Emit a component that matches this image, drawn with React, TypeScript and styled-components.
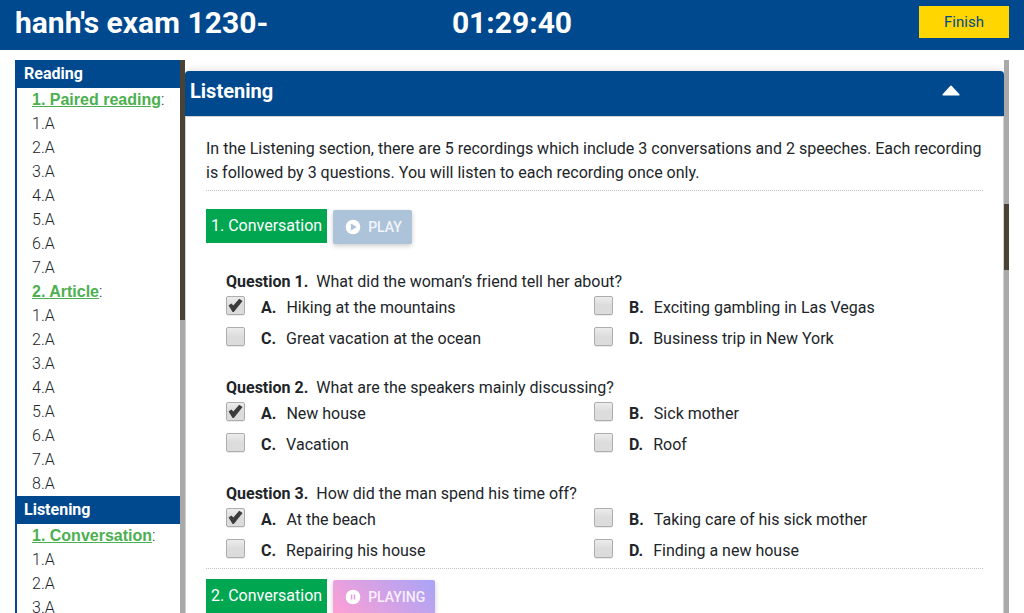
import React, { useState } from 'react';
import styled, { createGlobalStyle } from 'styled-components';

const BLUE = '#00498f';
const GREEN = '#00a650';
const RAIL = '#a9a9a9';
const THUMB = '#4b4236';

const GlobalStyle = createGlobalStyle`
  *, *::before, *::after { box-sizing: border-box; }
  body {
    margin: 0;
    background: #fff;
    color: #212529;
    font-family: Roboto, "Liberation Sans", sans-serif;
    font-size: 16px;
    line-height: 24px;
  }
  h1, h2, h3, p, ul, ol { margin: 0; padding: 0; font-size: inherit; }
  ul, ol { list-style: none; }
  button { font-family: inherit; cursor: pointer; }
`;

const Page = styled.div`
  display: flex;
  flex-direction: column;
  height: 100vh;
  overflow: hidden;
`;

const TopBar = styled.header`
  flex: none;
  display: grid;
  grid-template-columns: 1fr auto 1fr;
  align-items: start;
  height: 50px;
  padding: 6px 15px;
  background: ${BLUE};
  color: #fff;
`;

const ExamTitle = styled.h1`
  font-size: 30px;
  line-height: 34px;
  font-weight: 700;
  white-space: nowrap;
`;

const Timer = styled.div`
  font-size: 30px;
  line-height: 34px;
  font-weight: 700;
`;

const FinishButton = styled.button`
  justify-self: end;
  width: 90px;
  height: 32px;
  padding: 0;
  border: 0;
  background: #ffd600;
  color: ${BLUE};
  font-size: 15px;
`;

const Body = styled.div`
  flex: 1;
  min-height: 0;
  display: flex;
  padding: 10px 15px 0;
`;

const Sidebar = styled.nav`
  flex: none;
  display: flex;
  width: 170px;
`;

const SidebarList = styled.div`
  flex: 1;
  overflow: hidden;
  border-left: 2px solid ${BLUE};
`;

const SidebarHeading = styled.h2`
  padding: 0 7px;
  background: ${BLUE};
  color: #fff;
  font-weight: 700;
  line-height: 28px;
`;

const SidebarItem = styled.li`
  padding-left: 15px;
  font-weight: 300;
`;

const PartLink = styled.a`
  color: #4caf50;
  font-family: "Liberation Sans", Arial, sans-serif;
  font-weight: 700;
  text-decoration: underline;
`;

const Rail = styled.div`
  flex: none;
  display: flex;
  flex-direction: column;
  width: 5px;
  background: ${RAIL};
`;

const Thumb = styled.div<{ $size: number }>`
  height: ${(p) => p.$size}%;
  background: ${THUMB};
`;

const RailSpace = styled.div<{ $size: number }>`
  height: ${(p) => p.$size}%;
`;

const Main = styled.main`
  flex: 1;
  min-width: 0;
  display: flex;
`;

const Scroller = styled.div`
  flex: 1;
  min-width: 0;
  overflow: hidden;
  padding-top: 11px;
`;

const Card = styled.section`
  min-height: 100%;
  border: 1px solid #d0d0d0;
  border-top: 0;
  border-radius: 4px 4px 0 0;
  box-shadow: 0 0 10px rgba(0, 0, 0, 0.15);
`;

const CardHeader = styled.div`
  display: flex;
  align-items: center;
  justify-content: space-between;
  height: 45px;
  margin: 0 -1px;
  padding: 0 43px 6px 5px;
  border-radius: 4px 4px 0 0;
  background: ${BLUE};
  color: #fff;
  box-shadow: 0 1px 0 #d0d0d0;
`;

const CardTitle = styled.h2`
  font-size: 20px;
  font-weight: 700;
`;

const CollapseButton = styled.button`
  display: flex;
  padding: 0;
  border: 0;
  background: none;
  color: #fff;
`;

const CardBody = styled.div`
  padding: 21px 20px;
`;

const Intro = styled.p`
  padding-bottom: 5px;
  border-bottom: 1px dotted #c4c4c4;
`;

const Part = styled.section`
  border-bottom: 1px dotted #c4c4c4;
`;

const PartBar = styled.div<{ $first?: boolean }>`
  display: flex;
  align-items: flex-start;
  gap: 6px;
  padding: ${(p) => (p.$first ? 18 : 10)}px 0 26px;
`;

const PartLabel = styled.h3`
  padding: 0 5px;
  background: ${GREEN};
  color: #fff;
  font-weight: 400;
  line-height: 34px;
`;

const AudioButton = styled.button<{ $playing?: boolean }>`
  display: flex;
  align-items: center;
  gap: 7px;
  height: 34px;
  margin-top: 1px;
  padding: 0 10px 0 12px;
  border: 0;
  border-radius: 2px;
  background: ${(p) =>
    p.$playing ? 'linear-gradient(45deg, #ff9fd5, #a8a4f8)' : '#adc3da'};
  color: rgba(255, 255, 255, 0.85);
  font-size: 14px;
  font-weight: 500;
  box-shadow: 0 2px 5px rgba(0, 0, 0, 0.2);
`;

const Questions = styled.ol`
  display: flex;
  flex-direction: column;
  gap: 20px;
  padding: 0 21px 0 20px;
`;

const QuestionText = styled.p`
  display: flex;
  gap: 8px;
`;

const Options = styled.div`
  display: grid;
  grid-template-columns: 1fr 1fr;
`;

const Option = styled.label`
  display: flex;
  height: 31px;
  padding-top: 2px;
  cursor: pointer;
`;

const BoxSlot = styled.span`
  display: grid;
  width: 20px;
  height: 20px;
  margin-right: 15px;
  > * { grid-area: 1 / 1; }
`;

const Box = styled.input`
  appearance: none;
  width: 19px;
  height: 19px;
  margin: 0;
  border: 1px solid #adadad;
  border-radius: 2px;
  background: linear-gradient(#ececec, #dcdcdc 50%, #dcdcdc);
  box-shadow: 0 1px 0 rgba(0, 0, 0, 0.08);
`;

const Tick = styled.svg`
  pointer-events: none;
`;

const Letter = styled.b`
  margin-right: 10px;
`;

type QuestionData = { text: string; options: string[]; answer: number };

const LETTERS = ['A', 'B', 'C', 'D'];

const QUESTIONS: QuestionData[] = [
  {
    text: 'What did the woman’s friend tell her about?',
    options: [
      'Hiking at the mountains',
      'Exciting gambling in Las Vegas',
      'Great vacation at the ocean',
      'Business trip in New York',
    ],
    answer: 0,
  },
  {
    text: 'What are the speakers mainly discussing?',
    options: ['New house', 'Sick mother', 'Vacation', 'Roof'],
    answer: 0,
  },
  {
    text: 'How did the man spend his time off?',
    options: [
      'At the beach',
      'Taking care of his sick mother',
      'Repairing his house',
      'Finding a new house',
    ],
    answer: 0,
  },
];

const OUTLINE = [
  {
    title: 'Reading',
    parts: [
      { name: '1. Paired reading', count: 7 },
      { name: '2. Article', count: 8 },
    ],
  },
  { title: 'Listening', parts: [{ name: '1. Conversation', count: 3 }] },
];

function ScrollRail({ start, size }: { start: number; size: number }) {
  return (
    <Rail aria-hidden="true">
      <RailSpace $size={start} />
      <Thumb $size={size} />
    </Rail>
  );
}

function Question({ index, data }: { index: number; data: QuestionData }) {
  const [picked, setPicked] = useState(data.answer);
  return (
    <li>
      <QuestionText>
        <b>Question {index + 1}.</b>
        <span>{data.text}</span>
      </QuestionText>
      <Options>
        {data.options.map((option, i) => (
          <Option key={option}>
            <BoxSlot>
              <Box type="checkbox" checked={picked === i} onChange={() => setPicked(i)} />
              {picked === i && (
                <Tick width="19" height="19" viewBox="0 0 19 19" aria-hidden="true">
                  <path d="M2.6 9.6 5.4 7.6 7.3 9.6 13.2 2.8 16.6 5 7.8 16 6.6 16Z" fill="#3c3c3c" />
                </Tick>
              )}
            </BoxSlot>
            <Letter>{LETTERS[i]}.</Letter>
            <span>{option}</span>
          </Option>
        ))}
      </Options>
    </li>
  );
}

function PlayIcon() {
  return (
    <svg width="16" height="16" viewBox="0 0 16 16" aria-hidden="true">
      <circle cx="8" cy="8" r="7.3" fill="#fff" />
      <path d="M5.8 4.4v7.2L11.8 8Z" fill="#adc3da" />
    </svg>
  );
}

function PauseIcon() {
  return (
    <svg width="16" height="16" viewBox="0 0 16 16" aria-hidden="true">
      <circle cx="8" cy="8" r="7.3" fill="#fff" />
      <path d="M5.8 5.4h1.5v5H5.8ZM8.7 5.4h1.5v5H8.7Z" fill="#e0a2dd" />
    </svg>
  );
}

export default function App() {
  return (
    <Page>
      <GlobalStyle />
      <TopBar>
        <ExamTitle>hanh's exam 1230-</ExamTitle>
        <Timer role="timer">01:29:40</Timer>
        <FinishButton type="button">Finish</FinishButton>
      </TopBar>
      <Body>
        <Sidebar>
          <SidebarList>
            {OUTLINE.map((section) => (
              <section key={section.title}>
                <SidebarHeading>{section.title}</SidebarHeading>
                {section.parts.map((part) => (
                  <ul key={part.name}>
                    <SidebarItem>
                      <PartLink href="#">{part.name}</PartLink>:
                    </SidebarItem>
                    {Array.from({ length: part.count }, (_, i) => (
                      <SidebarItem key={i}>{i + 1}.A</SidebarItem>
                    ))}
                  </ul>
                ))}
              </section>
            ))}
          </SidebarList>
          <ScrollRail start={0} size={47} />
        </Sidebar>
        <Main>
          <Scroller>
            <Card>
              <CardHeader>
                <CardTitle>Listening</CardTitle>
                <CollapseButton type="button" aria-label="Collapse section">
                  <svg width="20" height="12" viewBox="0 0 20 12" aria-hidden="true">
                    <path d="M10 1.4 17.8 9.8H2.2Z" fill="#fff" stroke="#fff" strokeWidth="1.6" strokeLinejoin="round" />
                  </svg>
                </CollapseButton>
              </CardHeader>
              <CardBody>
                <Intro>
                  In the Listening section, there are 5 recordings which include 3 conversations and 2
                  speeches. Each recording is followed by 3 questions. You will listen to each
                  recording once only.
                </Intro>
                <Part>
                  <PartBar $first>
                    <PartLabel>1. Conversation</PartLabel>
                    <AudioButton type="button">
                      <PlayIcon />
                      PLAY
                    </AudioButton>
                  </PartBar>
                  <Questions>
                    {QUESTIONS.map((q, i) => (
                      <Question key={q.text} index={i} data={q} />
                    ))}
                  </Questions>
                </Part>
                <PartBar>
                  <PartLabel>2. Conversation</PartLabel>
                  <AudioButton type="button" $playing>
                    <PauseIcon />
                    PLAYING
                  </AudioButton>
                </PartBar>
              </CardBody>
            </Card>
          </Scroller>
          <ScrollRail start={26} size={12} />
        </Main>
      </Body>
    </Page>
  );
}
